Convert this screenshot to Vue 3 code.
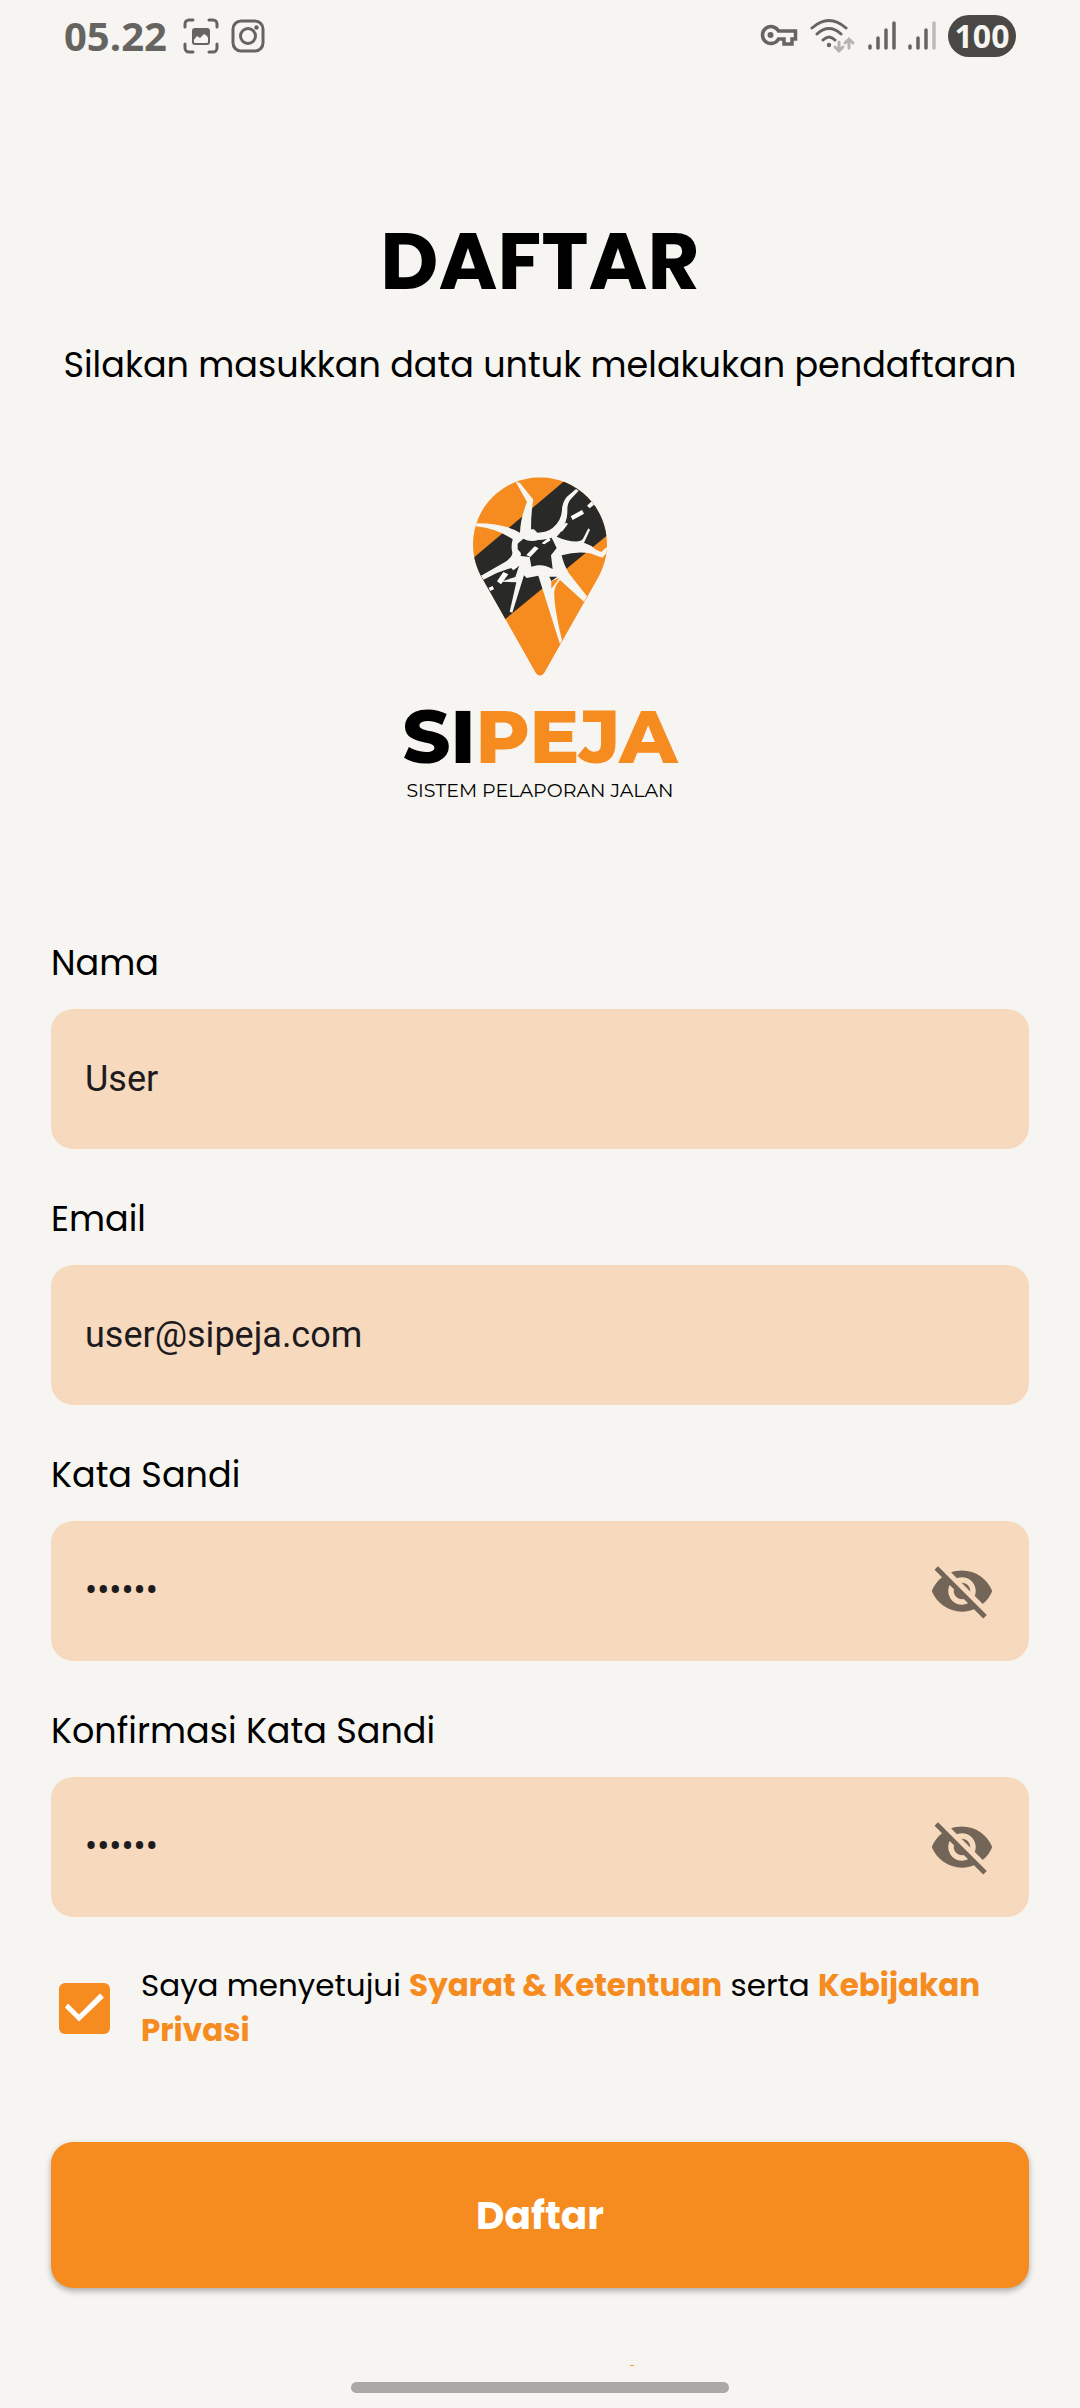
<script setup>
import { reactive, ref } from 'vue'

const fields = reactive([
  { id: 'nama', label: 'Nama', type: 'text', value: 'User' },
  { id: 'email', label: 'Email', type: 'email', value: 'user@sipeja.com' },
  { id: 'sandi', label: 'Kata Sandi', type: 'password', value: 'rahasi', secret: true },
  { id: 'konfirmasi', label: 'Konfirmasi Kata Sandi', type: 'password', value: 'rahasi', secret: true },
])
const agreed = ref(true)

function toggle(field) {
  field.type = field.type === 'password' ? 'text' : 'password'
}
</script>

<template>
  <div class="screen">
    <header class="status">
      <div class="status-left">
        <span class="time">05.22</span>
        <svg width="36" height="36" viewBox="0 0 36 36" fill="none" stroke="#666461" stroke-width="3" stroke-linecap="round">
          <path d="M2 9V6a4 4 0 0 1 4-4h4M26 2h4a4 4 0 0 1 4 4v3M34 26v4a4 4 0 0 1-4 4h-4M10 34H6a4 4 0 0 1-4-4v-4" />
          <rect x="10" y="11" width="16" height="15" rx="2" stroke-width="2" />
          <path d="M10 11h16v11l-2-4-3-2-4 4-3-2-4 5z" fill="#666461" stroke="none" />
        </svg>
        <svg width="34" height="34" viewBox="0 0 34 34" fill="none" stroke="#666461" stroke-width="3">
          <rect x="2" y="2" width="30" height="30" rx="8" />
          <circle cx="17" cy="17" r="7.5" />
          <circle cx="25.500" cy="8.500" r="2.200" fill="#666461" stroke="none" />
        </svg>
      </div>
      <div class="status-right">
        <svg width="38" height="24" viewBox="0 0 38 24" fill="none" stroke="#666461" stroke-width="3.500">
          <path d="M18.500 7A8.500 8.500 0 1 0 18.500 15H24V20H32V15H35.500V7Z" />
          <circle cx="10.500" cy="11" r="3" fill="#666461" stroke="none" />
        </svg>
        <svg width="46" height="36" viewBox="0 0 46 36" fill="none" stroke="#666461" stroke-width="3" stroke-linecap="round">
          <path d="M2 10Q19-5 36 10M7 16Q19 5 31 16M13 22Q19 16 25 22" />
          <circle cx="19" cy="27" r="2.200" fill="#666461" stroke="none" />
          <path d="M29 24v9M25 29l4 4 4-4M39 30v-9M35 25l4-4 4 4" stroke="#b5b3b0" />
        </svg>
        <svg width="28" height="30" viewBox="0 0 28 30" stroke="#666461" stroke-width="3.500" stroke-linecap="round">
          <path d="M2 25v2M10 17v10M18 9v18M26 2v25" />
        </svg>
        <svg width="28" height="30" viewBox="0 0 28 30" stroke="#666461" stroke-width="3.500" stroke-linecap="round">
          <path d="M2 25v2M10 17v10M18 9v18" />
          <path d="M26 2v25" stroke="#bdbbb8" />
        </svg>
        <span class="battery">100</span>
      </div>
    </header>

    <main class="content">
      <h1>DAFTAR</h1>
      <p class="intro">Silakan masukkan data untuk melakukan pendaftaran</p>

      <div class="brand">
        <svg class="pin" viewBox="66 50 408 600" role="img" aria-label="SIPEJA">
          <defs>
            <clipPath id="pin-shape">
              <path d="M257 637L98 356C80 325 69 290 69 252A201 201 0 0 1 471 252C471 290 460 325 442 356L283 637Q270 655 257 637Z" />
            </clipPath>
          </defs>
          <g clip-path="url(#pin-shape)">
            <rect x="60" y="40" width="420" height="620" fill="#f68b1f" />
            <path d="M40 318L400 14H560V152L120 514H40Z" fill="#292927" />
            <path d="M362 168L396 149L402 160L368 179ZM411 136L426 122L434 132L419 144ZM116 382L128 377L132 387L120 392ZM141 363L160 335L175 342L153 372Z" fill="#fff" />
            <path d="M197 64L210 68L250 118Q243 155 243 207L252 207L262 217Q290 217 308 203Q334 182 336 150Q336 128 350 110L378 86L386 91L362 117Q352 128 352 150Q354 180 330 218L320 229Q355 245 385 243Q395 241 399 235L415 204L420 208L402 247Q422 253 438 268L454 275L470 260L473 274L457 292L420 279Q380 272 335 285Q340 310 356 338L411 408L402 424L330 359Q318 370 313 392Q310 430 336 540L330 552L265 346L230 353L222 345L187 457L179 454L199 366L152 364L196 350L207 317Q150 330 100 358L93 346L160 308Q188 292 187 276Q182 262 188 237Q145 206 78 198V189Q160 188 210 217Q211 175 231 125Z" fill="#f6f5f1" />
            <path d="M203 250L220 235Q240 246 265 239Q290 238 305 232L320 263L303 285L308 326Q285 312 262 315L244 319L239 290L212 287L213 279L203 267Z" fill="#292927" />
            <path d="M298 349H322L304 362Z" fill="#292927" />
            <path d="M304 363L329 352L304 385Z" fill="#f68b1f" />
            <path d="M229 284L254 258L266 264L241 290ZM275 249L296 232L302 240L283 252ZM183 322L202 314L204 319L190 330ZM326 216L347 187L354 190L337 213Z" fill="#fff" />
          </g>
        </svg>
        <div class="wordmark">SI<span>PEJA</span></div>
        <div class="tagline">SISTEM PELAPORAN JALAN</div>
      </div>

      <form @submit.prevent>
        <div v-for="field in fields" :key="field.id" class="field">
          <label :for="field.id">{{ field.label }}</label>
          <div class="box">
            <input :id="field.id" v-model="field.value" :type="field.type" autocomplete="off" />
            <button v-if="field.secret" type="button" class="eye" aria-label="Tampilkan kata sandi" @click="toggle(field)">
              <svg viewBox="0 0 24 24" fill="#736557">
                <path d="M12 7c2.760 0 5 2.240 5 5 0 .65-.13 1.260-.36 1.830l2.920 2.920c1.510-1.260 2.700-2.890 3.430-4.750-1.730-4.390-6-7.500-11-7.500-1.400 0-2.740.25-3.980.7l2.160 2.160C10.740 7.130 11.350 7 12 7zM2 4.270l2.280 2.280.46.46C3.080 8.300 1.780 10.020 1 12c1.730 4.390 6 7.500 11 7.500 1.550 0 3.030-.3 4.380-.84l.42.42L19.730 22 21 20.730 3.270 3 2 4.270zM7.530 9.800l1.550 1.550c-.05.21-.08.43-.08.65 0 1.660 1.340 3 3 3 .22 0 .44-.03.65-.08l1.550 1.550c-.67.33-1.410.53-2.200.53-2.760 0-5-2.240-5-5 0-.79.2-1.530.53-2.200zm4.310-.78l3.150 3.150.02-.16c0-1.660-1.340-3-3-3l-.17.01z" />
              </svg>
            </button>
          </div>
        </div>

        <div class="consent">
          <input id="setuju" v-model="agreed" type="checkbox" />
          <label for="setuju">Saya menyetujui <a href="#syarat">Syarat &amp; Ketentuan</a> serta <a href="#privasi">Kebijakan Privasi</a></label>
        </div>

        <button class="submit" type="submit">Daftar</button>
      </form>
    </main>

    <footer class="bottom">
      <i class="speck"></i>
      <i class="home"></i>
    </footer>
  </div>
</template>

<style>
body {
  background: #f6f5f1;
}
</style>

<style scoped>
.screen {
  display: flex;
  flex-direction: column;
  box-sizing: border-box;
  min-height: 100vh;
  background: #f6f5f1;
  color: #000;
  font-family: Poppins, Inter, sans-serif;
}

svg {
  display: block;
}

.status,
.status-left,
.status-right {
  display: flex;
  align-items: center;
}

.status {
  justify-content: space-between;
  height: 72px;
  padding: 0 64px;
  font-family: "Open Sans", sans-serif;
}

.status-left,
.status-right {
  gap: 12px;
}

.time {
  color: #666461;
  font-size: 40px;
  font-weight: 700;
  line-height: 40px;
  margin-right: 4px;
}

.battery {
  width: 68px;
  border-radius: 21px;
  background: #4a4845;
  color: #f6f5f1;
  font-size: 32px;
  font-weight: 700;
  line-height: 42px;
  text-align: center;
}

.content {
  padding: 141px 51px 0;
}

h1 {
  margin: 0;
  font-size: 80px;
  font-weight: 700;
  line-height: 96px;
  text-align: center;
}

.intro {
  margin: 32px 0 0;
  font-size: 35px;
  line-height: 48px;
  text-align: center;
  white-space: nowrap;
}

.brand {
  display: flex;
  flex-direction: column;
  align-items: center;
  margin-top: 88px;
  font-family: Montserrat, Poppins, sans-serif;
}

.pin {
  width: 136px;
  height: 200px;
}

.wordmark {
  margin-top: 20px;
  font-size: 74px;
  font-weight: 800;
  line-height: 80px;
}

.wordmark span {
  color: #f68b1f;
}

.tagline {
  margin-top: 2px;
  font-size: 19px;
  line-height: 24px;
}

form {
  display: flex;
  flex-direction: column;
  margin-top: 136px;
}

.field {
  display: flex;
  flex-direction: column;
  gap: 22px;
  margin-bottom: 46px;
}

.field label {
  font-size: 35px;
  line-height: 48px;
}

.box {
  display: flex;
  align-items: center;
  box-sizing: border-box;
  height: 140px;
  padding: 0 34px;
  border-radius: 22px;
  background: #f7d9bd;
}

.box input {
  flex: 1;
  min-width: 0;
  padding: 0;
  border: 0;
  outline: 0;
  background: none;
  color: #1d1b20;
  font-family: Roboto, sans-serif;
  font-size: 36px;
  line-height: 48px;
}

.eye {
  padding: 0;
  border: 0;
  background: none;
}

.eye svg {
  width: 66px;
  height: 66px;
}

.consent {
  display: flex;
  align-items: center;
  gap: 31px;
  padding: 0 8px;
}

.consent input {
  appearance: none;
  flex: none;
  width: 51px;
  height: 51px;
  margin: 0;
  border: 5px solid #f68b1f;
  border-radius: 6px;
}

.consent input:checked {
  border: 0;
  background: #f68b1f;
}

.consent input:checked::before {
  content: "";
  display: block;
  height: 100%;
  background: #fff;
  clip-path: polygon(6px 25px, 9px 21px, 20px 32px, 41px 11px, 45px 15px, 20px 39px);
}

.consent label {
  font-size: 31px;
  line-height: 45px;
}

.consent a {
  color: #f68b1f;
  font-weight: 700;
  text-decoration: none;
}

.submit {
  height: 146px;
  margin-top: 89px;
  border: 0;
  border-radius: 22px;
  background: #f68b1f;
  box-shadow: 0 3px 6px rgba(0, 0, 0, 0.3);
  color: #fff;
  font-family: inherit;
  font-size: 39px;
  font-weight: 700;
}

.bottom {
  display: flex;
  flex-direction: column;
  align-items: center;
  gap: 16px;
  margin-top: auto;
  padding: 16px 0 15px;
}

.speck {
  width: 4px;
  height: 1px;
  margin-left: 17%;
  background: #f0a040;
}

.home {
  width: 35%;
  height: 11px;
  border-radius: 6px;
  background: #aaa9a6;
}
</style>
